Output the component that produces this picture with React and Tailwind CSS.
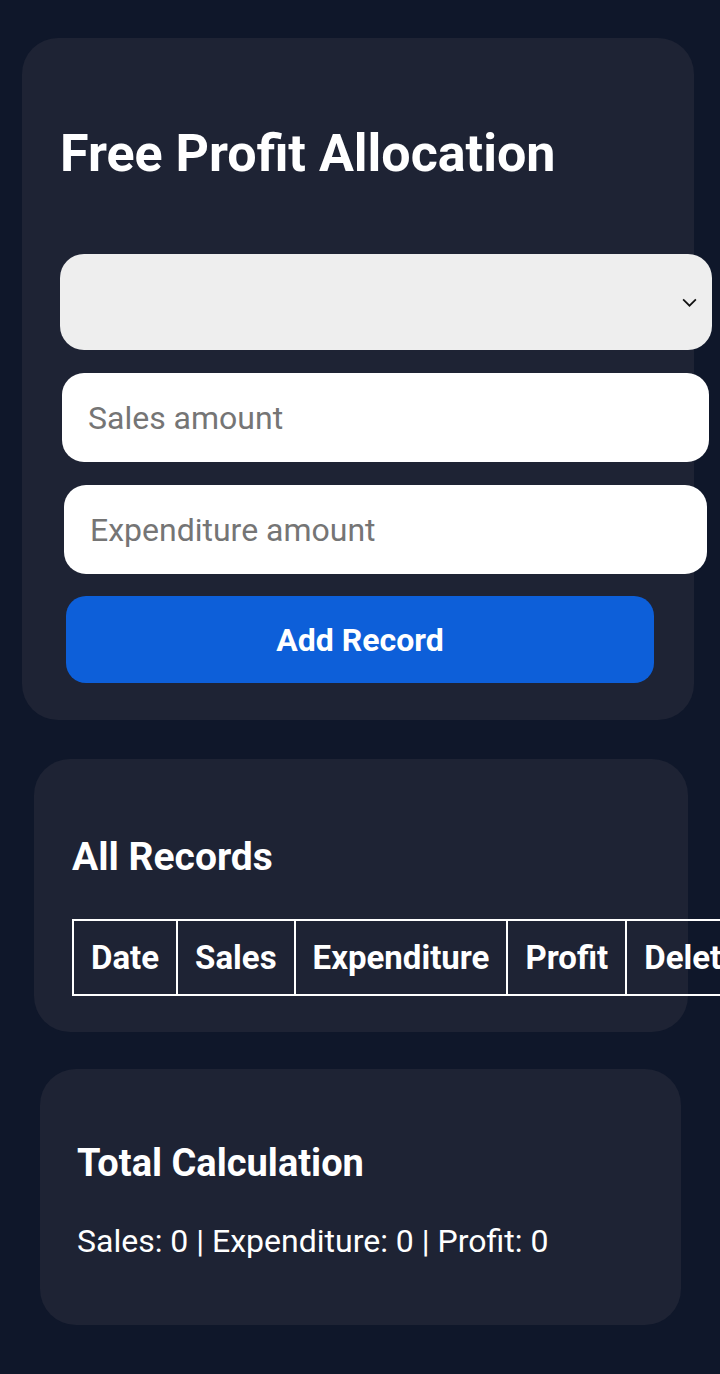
export default function App() {
  return (
    <div className="min-h-[1374px] w-full overflow-hidden bg-[#0f172a] pt-[38px] pb-[50px] font-['Roboto',sans-serif]">
      {/* Entry form */}
      <div className="ml-[22px] w-[672px] rounded-[36px] bg-[#1e2334] px-[38px] pt-[86px] pb-[37px]">
        <h1 className="text-[52px] font-bold leading-[60px] text-white">Free Profit Allocation</h1>
        <div className="mt-[70px] flex flex-col gap-[23px]">
          <div className="relative h-[96px] w-[652px] rounded-[24px] bg-[#eeeeee]">
            <svg className="absolute right-[14px] top-[40px] h-[17px] w-[17px]" viewBox="0 0 16 16" fill="none" stroke="#111" strokeWidth="1.6">
              <path d="M2 5l6 6 6-6" />
            </svg>
          </div>
          <input
            className="ml-[2px] h-[89px] w-[647px] rounded-[22px] bg-white px-[26px] text-[32px] text-gray-900 placeholder:text-[#757575] outline-none"
            placeholder="Sales amount"
          />
          <input
            className="ml-[4px] h-[89px] w-[643px] rounded-[22px] bg-white px-[26px] text-[32px] text-gray-900 placeholder:text-[#757575] outline-none"
            placeholder="Expenditure amount"
          />
        </div>
        <button className="ml-[6px] mt-[22px] h-[87px] w-[588px] rounded-[20px] bg-[#0d5fd9] text-[32px] font-bold text-white">
          Add Record
        </button>
      </div>

      {/* Records */}
      <div className="mt-[39px] ml-[34px] w-[654px] rounded-[36px] bg-[#1e2334] px-[38px] pt-[75px] pb-[36px]">
        <h2 className="text-[39px] font-bold leading-[46px] text-white">All Records</h2>
        <table className="mt-[39px] border-collapse border-2 border-white text-[33px] font-bold text-white">
          <thead>
            <tr className="h-[75px]">
              <th className="border-2 border-white px-[17px] text-left font-bold">Date</th>
              <th className="border-2 border-white px-[17px] text-left font-bold">Sales</th>
              <th className="border-2 border-white px-[17px] text-left font-bold">Expenditure</th>
              <th className="border-2 border-white px-[17px] text-left font-bold">Profit</th>
              <th className="border-2 border-white px-[17px] text-left font-bold">Delete</th>
            </tr>
          </thead>
        </table>
      </div>

      {/* Totals */}
      <div className="mt-[37px] ml-[40px] w-[641px] rounded-[36px] bg-[#1e2334] px-[37px] pt-[71px] pb-[64px]">
        <h2 className="text-[38px] font-bold leading-[46px] text-white">Total Calculation</h2>
        <p className="mt-[35px] text-[32px] leading-[40px] text-white">Sales: 0 | Expenditure: 0 | Profit: 0</p>
      </div>
    </div>
  );
}
